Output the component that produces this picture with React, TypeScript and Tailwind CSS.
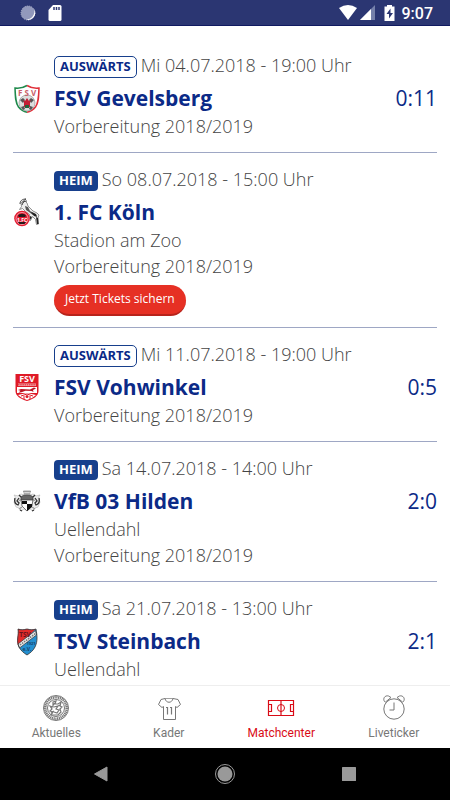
import React from "react";

type Match = {
  home: boolean;
  date: string;
  team: string;
  details: string[];
  score?: string;
  tickets?: boolean;
  crest: React.ReactNode;
};

function GevelsbergCrest() {
  return (
    <svg viewBox="0 0 28 30" className="h-[30px] w-7" role="img" aria-label="FSV Gevelsberg">
      <path d="M14 1.5C10 4 6 4.500 2 4c.3 9 .5 15 3.500 19 2.500 3 5.500 4.500 8.500 5.200" fill="#fff" stroke="#1f8a4c" strokeWidth="1.500" />
      <path d="M14 1.500c4 2.500 8 3 12 2.500-.3 9-.5 15-3.500 19-2.500 3-5.500 4.500-8.500 5.200" fill="#fff" stroke="#e0303a" strokeWidth="1.500" />
      <circle cx="14" cy="19" r="8" fill="#ddd" stroke="#999" strokeWidth=".7" />
      <path d="M7 16l3-2 2 2-2 3zM21 16l-3-2-2 2 2 3zM8 23l3-1 1 3-2 1zM20 23l-3-1-1 3 2 1z" fill="#555" />
      <path d="M11 23v-5l-1-2 2 1 2-3 2 3 2-1-1 2v5z" fill="#c41f35" />
      <path d="M12 21h4v3h-4z" fill="#23623c" />
      <text x="14" y="11.500" textAnchor="middle" fontSize="8" fill="#c9606a" fontWeight="700">F S V</text>
    </svg>
  );
}

function KoelnCrest() {
  return (
    <svg viewBox="0 0 28 30" className="h-[30px] w-7" role="img" aria-label="1. FC Köln">
      <path d="M8 5c1-1.500 2-2 4-2l2 2 1 3 5 5 4 2 2 2-1 3 .5 6-2 .5-1-5-3-3-2 4-2-1 1-5-4-3-3-3-3 1 2-3z" fill="#eee" stroke="#666" strokeWidth=".7" />
      <path d="M7 6c0-3 2-5 6-5-2 1-3 2-3 4M9 7c1-3 2-4 5-4" fill="none" stroke="#444" />
      <path d="M12 8l3 1 2 4 4 2 3 3-4-1-4-3-3-2z" fill="#555" />
      <path d="M18 14l5 2 1 3-3-1zM23 19l2 1 .5 6h-1.500zM17 18l2 1-2 3z" fill="#222" />
      <circle cx="9" cy="20.500" r="7.800" fill="#e31b30" />
      <circle cx="9" cy="20.500" r="6" fill="none" stroke="#f8b8bd" strokeWidth=".8" />
      <path d="M5 18c1-3 7-3 8 0l-1 1H6z" fill="#251a1b" />
      <path d="M5 24h8l-1.500 2h-5z" fill="#251a1b" />
      <text x="9" y="23.500" textAnchor="middle" fontSize="5" fontWeight="700" fill="#fff">1.FC</text>
    </svg>
  );
}

function VohwinkelCrest() {
  return (
    <svg viewBox="0 0 28 30" className="h-[30px] w-7" role="img" aria-label="FSV Vohwinkel">
      <path d="M2.500 1h23v17c0 5-5 8-11.500 10C7.500 26 2.500 23 2.500 18z" fill="#df1a27" />
      <text x="14" y="9" textAnchor="middle" fontSize="9" fontWeight="700" fill="#fff">FSV</text>
      <path d="M5 10.500h18v2.500H5z" fill="#f4a0a5" />
      <path d="M5 11.800h18" stroke="#d92632" strokeDasharray="1.500 .7" />
      <path d="M4 14h20v6H4z" fill="#fff" />
      <path d="M5 17l3-1 9 .5 4-2 2 1-3 1.500.5 2-2-1-6-.2-4 1.500-3 .5 2-2z" fill="#ba1624" />
      <path d="M5 22l9-2 9 2-4 3-5 2-5-2z" fill="#fff" />
      <path d="M8 23l6-2 6 2M11 23v3m6-3v3" stroke="#df1a27" fill="none" />
      <circle cx="14" cy="23.500" r="1.500" fill="#df1a27" />
    </svg>
  );
}

function HildenCrest() {
  return (
    <svg viewBox="0 0 28 30" className="h-[30px] w-7" role="img" aria-label="VfB 03 Hilden">
      <path d="M1 8l4 1 3-2 3 1V4h6v4l3-1 3 2 4-1-2 3 2 4-2 5-3 1-2 3-3-2-3 2-3-2-3 2-2-3-3-1-2-5 2-4z" fill="#eee" stroke="#bbb" strokeWidth=".7" />
      <path d="M2 11c-1 4 0 6 3 7l1-2-2-2 2-3M26 11c1 4 0 6-3 7l-1-2 2-2-2-3" fill="none" stroke="#333" strokeWidth="1.300" />
      <path d="M8 12h12l-1 7-5 5-5-5z" fill="#fff" stroke="#555" strokeWidth=".8" />
      <path d="M14 17h5v3l-5 4zM9 14h5v3H9z" fill="#111" />
      <path d="M8 10c3-3 9-3 12 0v3H8z" fill="#666" stroke="#333" strokeWidth=".7" />
      <path d="M10 4.500h8M11 7h6M6 22l3-2m10 0l3 2M6 13l2 1m12 0l2-1" stroke="#999" strokeWidth="1.300" />
      <path d="M7 23l2 1m10 0l2-1M6 8l2 2m12 0l2-2" stroke="#333" strokeWidth="1.300" />
    </svg>
  );
}

function SteinbachCrest() {
  return (
    <svg viewBox="0 0 28 30" className="h-[30px] w-7" role="img" aria-label="TSV Steinbach">
      <path d="M5 2c3 1 5 1 9 0 4 1 6 1 9 0 1 6 2 12-1 18-2 4-5 6-8 8-3-2-6-4-8-8C3 14 6 8 5 2z" fill="#238fd0" />
      <path d="M5 2c3 1 5 1 9 0 4 1 6 1 9 0L5 18C3 13 6 8 5 2z" fill="#e22c2b" />
      <path d="M22.500 3.500L5 17l1.500 4L23.500 8z" fill="#e8e8e8" stroke="#333" strokeWidth=".7" />
      <path d="M7 18L22.500 6.500" stroke="#777" strokeWidth="1.500" strokeDasharray="1.500 1" />
      <text x="12" y="9.500" textAnchor="middle" fontSize="6.500" fontWeight="700" fill="#68131b">TSV</text>
      <text x="18" y="18" textAnchor="middle" fontSize="4" fontWeight="700" fill="#174369">1921</text>
      <text x="14" y="24" textAnchor="middle" fontSize="5" fontWeight="700" fill="#174369">e.V.</text>
      <path d="M5 2c3 1 5 1 9 0 4 1 6 1 9 0 1 6 2 12-1 18-2 4-5 6-8 8-3-2-6-4-8-8C3 14 6 8 5 2z" fill="none" stroke="#333" strokeWidth=".8" />
    </svg>
  );
}

const matches: Match[] = [
  { home: false, date: "Mi 04.07.2018 - 19:00 Uhr", team: "FSV Gevelsberg", details: ["Vorbereitung 2018/2019"], score: "0:11", crest: <GevelsbergCrest /> },
  { home: true, date: "So 08.07.2018 - 15:00 Uhr", team: "1. FC Köln", details: ["Stadion am Zoo", "Vorbereitung 2018/2019"], tickets: true, crest: <KoelnCrest /> },
  { home: false, date: "Mi 11.07.2018 - 19:00 Uhr", team: "FSV Vohwinkel", details: ["Vorbereitung 2018/2019"], score: "0:5", crest: <VohwinkelCrest /> },
  { home: true, date: "Sa 14.07.2018 - 14:00 Uhr", team: "VfB 03 Hilden", details: ["Uellendahl", "Vorbereitung 2018/2019"], score: "2:0", crest: <HildenCrest /> },
  { home: true, date: "Sa 21.07.2018 - 13:00 Uhr", team: "TSV Steinbach", details: ["Uellendahl"], score: "2:1", crest: <SteinbachCrest /> },
];

function MatchRow({ match }: { match: Match }) {
  return (
    <li className={`flex border-b border-[#9ea7c4] pt-[13px] last:border-b-0 last:pb-0 ${match.tickets ? "pb-[11px]" : "pb-[13px]"}`}>
      <div className="w-[41px] shrink-0 pt-8">{match.crest}</div>
      <div className="min-w-0 flex-1">
        <div className="flex h-[26px] items-center gap-1">
          {match.home ? (
            <span className="mt-1 flex h-5 items-center rounded bg-[#173f8c] px-[5px] text-[13px] font-bold text-white">HEIM</span>
          ) : (
            <span className="mt-1 flex h-[22px] items-center rounded-[5px] border border-[#173f8c] px-[5px] text-[13px] font-bold text-[#0b2a87]">AUSWÄRTS</span>
          )}
          <span className="text-lg leading-[26px] font-light text-[#444444]">{match.date}</span>
        </div>
        <div className="flex h-[35px] items-center justify-between pt-1">
          <h2 className="text-[21px] leading-[30px] font-bold text-[#0b2a87]">{match.team}</h2>
          {match.score && <span className="text-[21px] leading-[30px] text-[#0b2a87]">{match.score}</span>}
        </div>
        {match.details.map((detail) => (
          <p key={detail} className="text-lg leading-[26px] font-light text-[#444444]">{detail}</p>
        ))}
        {match.tickets && (
          <button type="button" className="mt-1.5 block h-[31px] rounded-full border-b-2 border-[#b8231b] bg-[#e63024] px-[11px] pb-0.5 text-xs leading-5 text-white">
            Jetzt Tickets sichern
          </button>
        )}
      </div>
    </li>
  );
}

function StatusBar() {
  return (
    <header className="flex h-[26px] shrink-0 items-center justify-between border-b border-[#101a61] bg-[#2b3672] pr-[17px] pl-5 text-white">
      <div className="flex items-center gap-3">
        <svg viewBox="0 0 16 16" className="size-4" aria-hidden="true">
          <circle cx="8" cy="8" r="7" fill="#9299bc" stroke="#b6bbd0" strokeDasharray="1 1" />
          <path d="M14 4a7 7 0 0 1-8 10.500 8 8 0 0 0 8-10.500z" fill="#fff" />
        </svg>
        <svg viewBox="0 0 14 16" className="h-4 w-3.5" aria-hidden="true">
          <path d="M5 0h7q1.500 0 1.500 1.500v13q0 1.500-1.500 1.500H2q-1.500 0-1.500-1.500V5z" fill="#fff" />
          <path d="M6 2v3m2.500-3v3M11 2v3" stroke="#2b3672" strokeWidth="1.500" />
        </svg>
      </div>
      <div className="flex items-center">
        <svg viewBox="0 0 18 16" className="h-4 w-[18px]" aria-hidden="true"><path d="M0 3q9-6 18 0L9 15z" fill="#fff" /></svg>
        <svg viewBox="0 0 15 16" className="ml-[3px] h-4 w-[15px]" aria-hidden="true"><path d="M0 15L15 0v15z" fill="#7580aa" /><path d="M0 15L11 4v11z" fill="#fff" /></svg>
        <svg viewBox="0 0 11 16" className="ml-[9px] h-4 w-[11px]" aria-hidden="true"><path d="M3 0h5v1.500h2.500V16H.5V1.500H3z" fill="#fff" /><path d="M6.500 3.500L2.500 9H5v4.500L9 8H6.500z" fill="#2b3672" /></svg>
        <span className="ml-[7px] pt-0.5 font-['Roboto',sans-serif] text-base leading-5 font-medium">9:07</span>
      </div>
    </header>
  );
}

function NewsIcon() {
  return (
    <svg viewBox="0 0 28 28" className="size-7" fill="none" stroke="#777" aria-hidden="true">
      <circle cx="14" cy="14" r="12.500" />
      <circle cx="14" cy="14" r="10.700" strokeWidth="2.600" strokeDasharray="1.200 .6" />
      <circle cx="14" cy="14" r="8.500" />
      <path d="M11 8l3-1-1 3h3l3-2-1 4 2 1-2 2 1 3-3 3H9l2-3-3-1 2-2-2-3 3 1zM12 13l4-1-2 3 3 1-2 3-3-1M9 19l3-2m4-5l2-1m-5-2l-2 2" strokeWidth="1.200" />
    </svg>
  );
}

function ShirtIcon() {
  return (
    <svg viewBox="0 0 28 28" className="size-7" fill="none" stroke="#777" aria-hidden="true">
      <path d="M10 4.500l-4 1-2.500 5L7 13.500l1.500-1v13h12v-13l1.500 1 3.500-3-2.500-5-5-1c-1 5-7 5-8 0z" />
      <path d="M10 4.500h8" strokeWidth=".7" />
      <path d="M11 13.500h1.500v7m2.500-7h1.500v7" strokeWidth="1.200" />
    </svg>
  );
}

function PitchIcon() {
  return (
    <svg viewBox="0 0 28 28" className="size-7" fill="none" stroke="#d90b16" aria-hidden="true">
      <path d="M1.500 6.500h25v15h-25zM14 6.500v15M1.500 10.500h3v7h-3M26.500 10.500h-3v7h3" strokeWidth="1.200" />
      <circle cx="14" cy="14" r="3.500" />
    </svg>
  );
}

function ClockIcon() {
  return (
    <svg viewBox="0 0 28 28" className="size-7" fill="none" stroke="#777" aria-hidden="true">
      <circle cx="14" cy="15" r="10.200" />
      <path d="M14 8.500V16H9.500M4.500 7.500C2.500 4.500 5 1 8.500 2L11 3.500 5.500 8zM23.500 7.500c2-3-.5-6.500-4-5.500L17 3.500 22.500 8z" />
    </svg>
  );
}

const tabs = [
  { label: "Aktuelles", icon: <NewsIcon />, active: false },
  { label: "Kader", icon: <ShirtIcon />, active: false },
  { label: "Matchcenter", icon: <PitchIcon />, active: true },
  { label: "Liveticker", icon: <ClockIcon />, active: false },
];

export default function App() {
  return (
    <div className="flex h-screen flex-col bg-white font-['Open_Sans',sans-serif]">
      <StatusBar />
      <main className="min-h-0 flex-1 overflow-hidden px-[13px] pt-[13px]">
        <ul>{matches.map((match) => <MatchRow key={match.team} match={match} />)}</ul>
      </main>
      <nav className="grid h-[63px] shrink-0 grid-cols-4 border-t border-[#eeeeee] bg-white font-['Roboto',sans-serif]">
        {tabs.map((tab) => (
          <button key={tab.label} type="button" aria-current={tab.active ? "page" : undefined} className={`flex flex-col items-center pt-2 text-xs leading-[22px] ${tab.active ? "text-[#d90b16]" : "text-[#777777]"}`}>
            {tab.icon}
            <span>{tab.label}</span>
          </button>
        ))}
      </nav>
      <footer className="flex h-[52px] shrink-0 items-center justify-center gap-[100px] bg-black">
        <button type="button" aria-label="Zurück"><svg viewBox="0 0 24 24" className="size-6"><path d="M5.500 12L18 5v14z" fill="#999" stroke="#999" strokeLinejoin="round" /></svg></button>
        <button type="button" aria-label="Startbildschirm"><svg viewBox="0 0 24 24" className="size-6"><circle cx="12" cy="12" r="9.500" fill="none" stroke="#999" /><circle cx="12" cy="12" r="7.500" fill="#999" /></svg></button>
        <button type="button" aria-label="Übersicht"><svg viewBox="0 0 24 24" className="size-6"><rect x="5" y="5" width="14" height="14" rx=".5" fill="#999" /></svg></button>
      </footer>
    </div>
  );
}
